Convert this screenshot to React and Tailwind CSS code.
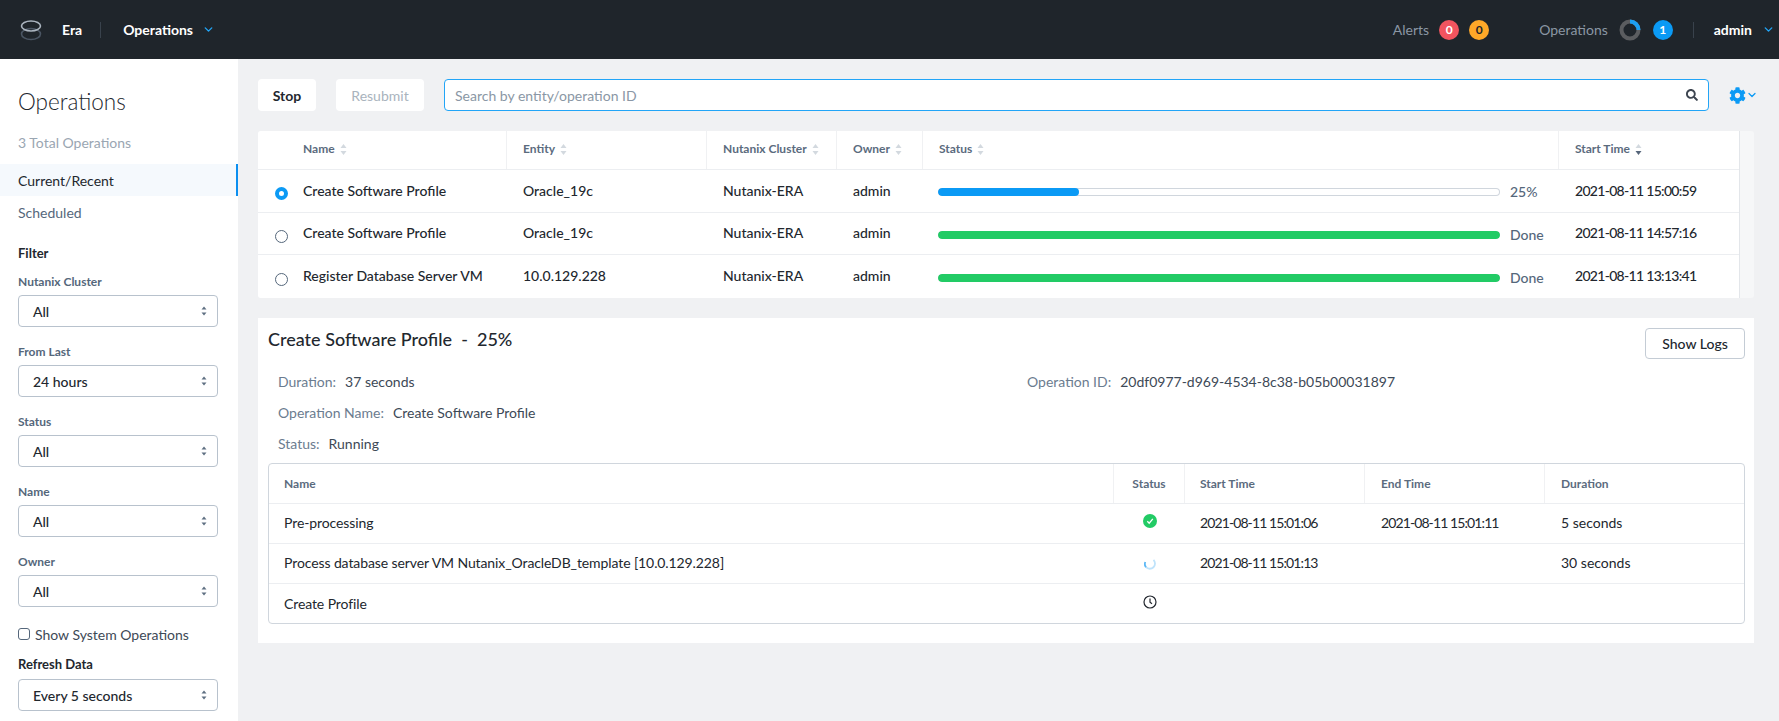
import React from "react";
import { FaCog, FaSearch } from "react-icons/fa";
import { ChevronDown } from "lucide-react";

const filters = [
  { label: "Nutanix Cluster", value: "All" },
  { label: "From Last", value: "24 hours" },
  { label: "Status", value: "All" },
  { label: "Name", value: "All" },
  { label: "Owner", value: "All" }
];

const operations = [
  { name: "Create Software Profile", entity: "Oracle_19c", progress: 25, label: "25%", start: "2021-08-11 15:00:59", selected: true, height: "h-[43px]" },
  { name: "Create Software Profile", entity: "Oracle_19c", progress: 100, label: "Done", start: "2021-08-11 14:57:16", height: "h-[42px]" },
  { name: "Register Database Server VM", entity: "10.0.129.228", progress: 100, label: "Done", start: "2021-08-11 13:13:41", height: "h-[43px]" }
];

const steps = [
  { name: "Pre-processing", icon: "done", start: "2021-08-11 15:01:06", end: "2021-08-11 15:01:11", duration: "5 seconds" },
  { name: "Process database server VM Nutanix_OracleDB_template [10.0.129.228]", icon: "running", start: "2021-08-11 15:01:13", end: "", duration: "30 seconds" },
  { name: "Create Profile", icon: "pending", start: "", end: "", duration: "" }
];

const opColumns = "grid grid-cols-[249px_200px_130px_86px_636px_1fr]";
const stepColumns = "grid grid-cols-[845px_71px_180px_180px_1fr]";

function Logo() {
  return (
    <svg width="22" height="22" viewBox="0 0 22 22" fill="none">
      <ellipse cx="11" cy="15" rx="9.500" ry="5.500" stroke="#4a5563" strokeWidth="1.600" />
      <ellipse cx="11" cy="7" rx="9.500" ry="5" stroke="#aab4bf" strokeWidth="1.600" />
    </svg>
  );
}

function SortIcon({ active }) {
  return (
    <svg width="7" height="13" viewBox="0 0 7 13" className="ml-[5px]">
      <path d="M3.500 1 L6.500 5 H0.500 Z" fill="#d3d9df" />
      <path d="M3.500 12 L6.500 8 H0.500 Z" fill={active ? "#56657a" : "#d3d9df"} />
    </svg>
  );
}

function SelectArrows() {
  return (
    <svg width="6" height="10" viewBox="0 0 6 10">
      <path d="M3 0.500 L5.500 3.500 H0.500 Z" fill="#5e6f82" />
      <path d="M3 9.500 L5.500 6.500 H0.500 Z" fill="#5e6f82" />
    </svg>
  );
}

function SelectBox({ value }) {
  return (
    <div className="flex h-[32px] w-[200px] items-center justify-between rounded-[4px] border border-[#b8c2cd] bg-white pl-[14px] pr-[10px] text-[14px] font-medium text-[#22272e]">
      <span>{value}</span>
      <SelectArrows />
    </div>
  );
}

function Badge({ color, text = "text-white", children }) {
  return (
    <span className={`flex h-[20px] w-[20px] items-center justify-center rounded-full text-[12px] font-bold ${color} ${text}`}>
      {children}
    </span>
  );
}

function Header() {
  return (
    <header className="flex h-[59px] items-center bg-[#1f252b] text-[14px]">
      <div className="ml-[20px]">
        <Logo />
      </div>
      <span className="ml-[20px] font-bold text-white">Era</span>
      <span className="ml-[18px] h-[16px] w-px bg-[#39424c]" />
      <span className="ml-[22px] font-bold text-white">Operations</span>
      <ChevronDown size={13} strokeWidth={2.500} className="ml-[9px] text-[#22a5f7]" />

      <span className="ml-auto text-[#8b97a4]">Alerts</span>
      <div className="ml-[10px] flex gap-[10px]">
        <Badge color="bg-[#f2545f]">0</Badge>
        <Badge color="bg-[#ffa828]" text="text-[#1f252b]">0</Badge>
      </div>
      <span className="ml-[50px] text-[#8b97a4]">Operations</span>
      <svg width="22" height="22" viewBox="0 0 22 22" className="ml-[11px]">
        <circle cx="11" cy="11" r="8.500" fill="none" stroke="#5b5d60" strokeWidth="4" />
        <path d="M11 2.500 A8.500 8.500 0 0 1 19.500 11" fill="none" stroke="#1c9ff2" strokeWidth="4" />
      </svg>
      <div className="ml-[12px]">
        <Badge color="bg-[#0b9af5]">1</Badge>
      </div>
      <span className="ml-[20px] h-[16px] w-px bg-[#39424c]" />
      <span className="ml-[20px] font-bold text-white">admin</span>
      <ChevronDown size={13} strokeWidth={2.500} className="ml-[10px] mr-[4px] text-[#22a5f7]" />
    </header>
  );
}

function Sidebar() {
  return (
    <aside className="h-[662px] w-[238px] shrink-0 overflow-hidden bg-white">
      <h1 className="ml-[18px] mt-[28px] text-[22.500px] leading-[30px] font-light text-[#22272e]">Operations</h1>
      <p className="ml-[18px] mt-[16px] text-[14px] leading-[20px] text-[#9aa6b2]">3 Total Operations</p>
      <div className="relative mt-[11px] flex h-[32px] items-center bg-[#f5f9fd] pl-[18px] text-[14px] text-[#22272e]">
        Current/Recent
        <span className="absolute right-[-1px] top-0 h-full w-[3px] bg-[#0b8ff0]" />
      </div>
      <div className="flex h-[32px] items-center pl-[18px] text-[14px] text-[#55677b]">Scheduled</div>
      <p className="ml-[18px] mt-[16px] text-[13px] leading-[18px] font-bold text-[#22272e]">Filter</p>
      <div className="ml-[18px] mt-[11px] flex flex-col gap-[16px]">
        {filters.map((filter) => (
          <div key={filter.label}>
            <p className="mb-[5px] text-[12px] leading-[17px] font-bold text-[#55677b]">{filter.label}</p>
            <SelectBox value={filter.value} />
          </div>
        ))}
      </div>
      <label className="ml-[18px] mt-[17px] flex h-[20px] items-center gap-[5px] text-[14px] text-[#3d4956]">
        <span className="h-[12px] w-[12px] rounded-[3px] border border-[#55677b] bg-white" />
        Show System Operations
      </label>
      <p className="ml-[18px] mt-[10px] text-[13px] leading-[20px] font-bold text-[#22272e]">Refresh Data</p>
      <div className="ml-[18px] mt-[5px]">
        <SelectBox value="Every 5 seconds" />
      </div>
    </aside>
  );
}

function Toolbar() {
  return (
    <div className="flex h-[32px] items-center text-[14px]">
      <button type="button" className="h-full w-[58px] rounded-[4px] bg-white font-bold text-[#22272e]">Stop</button>
      <button type="button" className="ml-[20px] h-full w-[88px] rounded-[4px] bg-white text-[#a9b3bd]">Resubmit</button>
      <div className="ml-[20px] flex h-full w-[1265px] items-center justify-between rounded-[4px] border border-[#22a5f7] bg-white pl-[10px] pr-[10px]">
        <span className="text-[#8a97a5]">Search by entity/operation ID</span>
        <FaSearch size={12} className="text-[#3d4550]" />
      </div>
      <FaCog size={17} className="ml-[20px] text-[#0b9af5]" />
      <ChevronDown size={12} strokeWidth={2.500} className="text-[#0b9af5]" />
    </div>
  );
}

function Progress({ value, label }) {
  const color = value === 100 ? "bg-[#22cb65]" : "bg-[#0b9af5]";
  return (
    <div className="flex items-center pl-[15px] pt-[2px]">
      <div className="h-[8px] w-[562px] overflow-hidden rounded-full bg-white shadow-[inset_0_0_0_1px_#d0d6dd]">
        <div className={`h-full rounded-full ${color}`} style={{ width: `${value}%` }} />
      </div>
      <span className="ml-[10px] mb-[1px] text-[14px] text-[#55677b]">{label}</span>
    </div>
  );
}

function OperationsTable() {
  const headers = ["Name", "Entity", "Nutanix Cluster", "Owner", "Status", "Start Time"];
  return (
    <div className="mt-[20px] w-[1496px] rounded-[3px] bg-[#f6f7f8]">
      <div className="w-[1482px] rounded-l-[3px] border-r border-[#e3e6ea] bg-white">
        <div className={`${opColumns} h-[39px] border-b border-[#eceef1]`}>
          {headers.map((header, i) => (
            <div
              key={header}
              className={`flex items-center pb-[2px] text-[12px] font-bold text-[#5b6b7e] ${i === 0 ? "pl-[45px]" : "pl-[16px]"} ${i < 5 ? "border-r border-[#f0f1f3]" : ""}`}
            >
              {header}
              <SortIcon active={i === 5} />
            </div>
          ))}
        </div>
        {operations.map((op, i) => (
          <div key={i} className={`${opColumns} ${op.height} items-center text-[14px] font-medium text-[#22272e] ${i < 2 ? "border-b border-[#eceef1]" : ""}`}>
            <div className="flex items-center">
              <span className={`ml-[17px] mt-[5px] h-[13px] w-[13px] shrink-0 rounded-full ${op.selected ? "border-[4px] border-[#0b9af5] bg-white" : "border border-[#55677b] bg-white"}`} />
              <span className="ml-[15px] mb-[2px]">{op.name}</span>
            </div>
            <div className="mb-[2px] pl-[16px]">{op.entity}</div>
            <div className="mb-[2px] pl-[16px]">Nutanix-ERA</div>
            <div className="mb-[2px] pl-[16px]">admin</div>
            <Progress value={op.progress} label={op.label} />
            <div className="mb-[2px] pl-[16px] tracking-[-0.7px]">{op.start}</div>
          </div>
        ))}
      </div>
    </div>
  );
}

function StepIcon({ kind }) {
  if (kind === "done") {
    return (
      <svg width="14" height="14" viewBox="0 0 14 14" className="mb-[5px]">
        <circle cx="7" cy="7" r="7" fill="#22cb65" />
        <path d="M4.300 7.200 L6.200 9.200 L9.800 4.900" fill="none" stroke="#fff" strokeWidth="1.300" />
      </svg>
    );
  }
  if (kind === "running") {
    return (
      <svg width="12" height="12" viewBox="0 0 12 12">
        <path d="M9.500 1.800 A5 5 0 0 1 2 9.200" fill="none" stroke="#bfe3fb" strokeWidth="1.800" />
        <path d="M2 9.200 A5 5 0 0 1 1.300 4" fill="none" stroke="#5cb8f6" strokeWidth="1.800" />
      </svg>
    );
  }
  return (
    <svg width="14" height="14" viewBox="0 0 14 14" className="mb-[4px]">
      <circle cx="7" cy="7" r="6" fill="none" stroke="#22272e" strokeWidth="1.200" />
      <path d="M7 3.500 V7.200 L9 8.800" fill="none" stroke="#22272e" strokeWidth="1.200" />
    </svg>
  );
}

function StepsTable() {
  return (
    <div className="ml-[10px] mt-[9px] h-[161px] w-[1477px] rounded-[4px] border border-[#d0d6dd]">
      <div className={`${stepColumns} h-[40px] border-b border-[#eceef1] text-[12px] font-bold text-[#5b6b7e]`}>
        <div className="flex items-center border-r border-[#f0f1f3] pl-[15px]">Name</div>
        <div className="flex items-center justify-center border-r border-[#f0f1f3]">Status</div>
        <div className="flex items-center border-r border-[#f0f1f3] pl-[15px]">Start Time</div>
        <div className="flex items-center border-r border-[#f0f1f3] pl-[16px]">End Time</div>
        <div className="flex items-center pl-[16px]">Duration</div>
      </div>
      {steps.map((step, i) => (
        <div key={step.name} className={`${stepColumns} h-[40px] items-center text-[14px] text-[#22272e] ${i < 2 ? "border-b border-[#eceef1]" : ""}`}>
          <div className="mb-[2px] pl-[15px] tracking-[-0.1px]">{step.name}</div>
          <div className="flex justify-center"><StepIcon kind={step.icon} /></div>
          <div className="mb-[2px] pl-[15px] tracking-[-0.9px]">{step.start}</div>
          <div className="mb-[2px] pl-[16px] tracking-[-0.9px]">{step.end}</div>
          <div className="mb-[2px] pl-[16px]">{step.duration}</div>
        </div>
      ))}
    </div>
  );
}

function Detail({ label, value }) {
  return (
    <p className="text-[14px] leading-[20px]">
      <span className="text-[#6b7c8f]">{label}</span>
      <span className="ml-[9px] text-[#3d4956]">{value}</span>
    </p>
  );
}

function OperationDetail() {
  return (
    <section className="mt-[20px] h-[325px] w-[1496px] bg-white pt-[10px]">
      <div className="flex items-start justify-between pl-[10px] pr-[9px]">
        <h2 className="whitespace-pre text-[18px] leading-[22px] font-medium text-[#22272e]">Create Software Profile  -  25%</h2>
        <button type="button" className="h-[31px] w-[100px] rounded-[4px] border border-[#c4ccd5] bg-white text-[14px] font-medium text-[#22272e]">Show Logs</button>
      </div>
      <div className="flex pl-[20px] pt-[13px]">
        <div className="w-[749px]">
          <Detail label="Duration:" value="37 seconds" />
        </div>
        <Detail label="Operation ID:" value="20df0977-d969-4534-8c38-b05b00031897" />
      </div>
      <div className="flex flex-col gap-[11px] pl-[20px] pt-[11px]">
        <Detail label="Operation Name:" value="Create Software Profile" />
        <Detail label="Status:" value="Running" />
      </div>
      <StepsTable />
    </section>
  );
}

export default function App() {
  return (
    <div className="h-screen overflow-hidden bg-[#f0f1f3] font-['Lato','Noto_Sans',sans-serif]">
      <Header />
      <div className="flex">
        <Sidebar />
        <main className="min-w-0 flex-1 pl-[20px] pt-[20px]">
          <Toolbar />
          <OperationsTable />
          <OperationDetail />
        </main>
      </div>
    </div>
  );
}
